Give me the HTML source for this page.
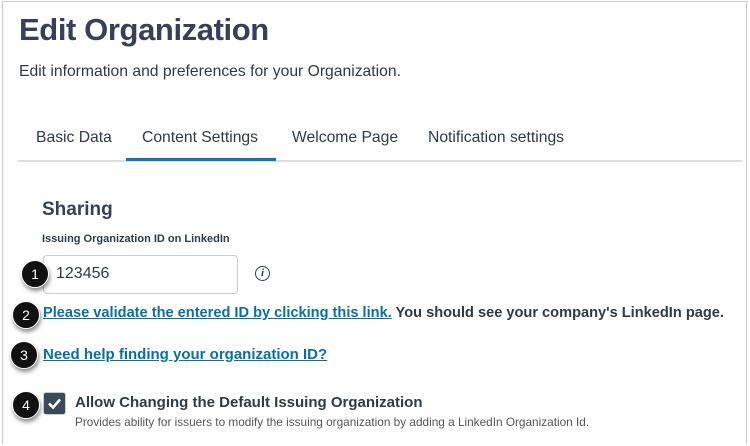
<!DOCTYPE html>
<html><head><meta charset="utf-8"><style>
*{margin:0;padding:0;box-sizing:border-box}
body{width:750px;height:446px;background:#fff;font-family:"Liberation Sans",sans-serif;color:#2d3b45;position:relative;overflow:hidden}
.frame{position:absolute;left:2px;top:1px;width:745px;height:443px;border:1px solid #c9c9c9;border-bottom:none}
.a{position:absolute;white-space:nowrap}
h1{position:absolute;left:19px;top:12px;font-size:31px;font-weight:bold;color:#37405a;letter-spacing:-0.4px}
.tab{position:absolute;top:129px;font-size:15.7px;color:#2d3b45}
.line{position:absolute;left:18px;top:160px;width:724px;height:2px;background:#dcdfe2}
.act{position:absolute;left:126px;top:158px;width:150px;height:3px;background:#1474b7}
.link{color:#0770a3;text-decoration:underline;font-weight:bold}
.badge{position:absolute;width:28px;height:28px;border-radius:50%;background:#111;color:#fff;font-size:14px;text-align:center;line-height:26px;box-shadow:1px 3px 4px rgba(0,0,0,.45);border:1px solid #fff}
</style></head><body>
<div class="frame"></div>
<h1>Edit Organization</h1>
<div class="a" style="left:19px;top:63px;font-size:15.7px">Edit information and preferences for your Organization.</div>
<div class="tab" style="left:36px">Basic Data</div>
<div class="tab" style="left:142px">Content Settings</div>
<div class="tab" style="left:292px">Welcome Page</div>
<div class="tab" style="left:428px">Notification settings</div>
<div class="line"></div><div class="act"></div>
<div class="a" style="left:42px;top:199px;font-size:19px;font-weight:bold;color:#37405a">Sharing</div>
<div class="a" style="left:42px;top:233px;font-size:11px;font-weight:bold">Issuing Organization ID on LinkedIn</div>
<div class="a" style="left:43px;top:255px;width:195px;height:39px;border:1px solid #c7cdd1;border-radius:4px"></div>
<div class="a" style="left:56px;top:265px;font-size:16px;color:#2d3b45">123456</div>
<div class="a" style="left:255px;top:266px;width:15px;height:15px;border:1.3px solid #2d3b45;border-radius:50%;font-size:11px;font-style:italic;font-family:'Liberation Serif',serif;text-align:center;line-height:13px;font-weight:bold">i</div>
<div class="a" style="left:43px;top:305px;font-size:14.6px;font-weight:bold"><span class="link">Please validate the entered ID by clicking this link.</span> You should see your company's LinkedIn page.</div>
<div class="a" style="left:43px;top:346px;font-size:15px"><span class="link">Need help finding your organization ID?</span></div>
<div class="a" style="left:43px;top:392px;width:23px;height:23px;background:#394b58;border-radius:3px;border:1px solid #c7cdd1">
<svg width="21" height="21" viewBox="0 0 21 21"><path d="M5 10.5l4 4 7-8" stroke="#fff" stroke-width="2.6" fill="none"/></svg></div>
<div class="a" style="left:75px;top:394px;font-size:15px;font-weight:bold">Allow Changing the Default Issuing Organization</div>
<div class="a" style="left:75px;top:415px;font-size:11.8px;color:#555">Provides ability for issuers to modify the issuing organization by adding a LinkedIn Organization Id.</div>
<div class="badge" style="left:21px;top:260px">1</div>
<div class="badge" style="left:12px;top:301px">2</div>
<div class="badge" style="left:10px;top:341px">3</div>
<div class="badge" style="left:12px;top:391px">4</div>
</body></html>
